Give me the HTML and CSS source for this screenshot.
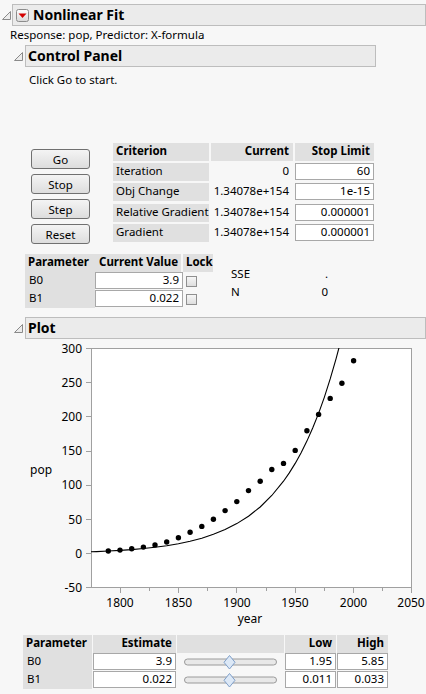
FILE: index.html
```html
<!DOCTYPE html>
<html>
<head>
<meta charset="utf-8">
<link rel="stylesheet" href="styles.css">
</head>
<body>
<div class="report">
  <div class="ohead top">
    <svg class="disc" width="9" height="9" viewBox="0 0 9 9"><polygon points="8.5,0.5 8.5,8.5 0.5,8.5" fill="#ececec" stroke="#8a8a8a"/></svg>
    <div class="bar">
      <svg class="redbtn" width="13" height="13" viewBox="0 0 13 13">
        <defs><linearGradient id="rb" x1="0" y1="0" x2="0" y2="1"><stop offset="0" stop-color="#ffffff"/><stop offset="1" stop-color="#d8d8d8"/></linearGradient></defs>
        <rect x="0.5" y="0.5" width="12" height="12" rx="2" fill="url(#rb)" stroke="#8c8c8c"/>
        <polygon points="2.5,4.5 10.5,4.5 6.5,9" fill="#d40000"/>
      </svg>
      <span class="title">Nonlinear Fit</span>
    </div>
  </div>
  <div class="resp">Response: pop, Predictor: X-formula</div>

  <div class="ohead sub cp">
    <svg class="disc" width="9" height="9" viewBox="0 0 9 9"><polygon points="8.5,0.5 8.5,8.5 0.5,8.5" fill="#ececec" stroke="#8a8a8a"/></svg>
    <div class="bar"><span class="title t2">Control Panel</span></div>
  </div>
  <div class="hint">Click Go to start.</div>

  <div class="cp-row">
    <div class="buttons">
      <div class="btn">Go</div>
      <div class="btn">Stop</div>
      <div class="btn">Step</div>
      <div class="btn">Reset</div>
    </div>
    <div class="grid crit">
      <div class="hd l">Criterion</div><div class="hd r">Current</div><div class="hd r">Stop Limit</div>
      <div class="lab">Iteration</div><div class="val">0</div><div class="box">60</div>
      <div class="lab">Obj Change</div><div class="val">1.34078e+154</div><div class="box">1e-15</div>
      <div class="lab">Relative Gradient</div><div class="val">1.34078e+154</div><div class="box">0.000001</div>
      <div class="lab">Gradient</div><div class="val">1.34078e+154</div><div class="box">0.000001</div>
    </div>
  </div>

  <div class="param-row">
    <div class="grid ptab">
      <div class="hd l">Parameter</div><div class="hd r">Current Value</div><div class="hd l lock">Lock</div>
      <div class="lab">B0</div><div class="box">3.9</div><div class="chk"><span class="cb"></span></div>
      <div class="lab">B1</div><div class="box">0.022</div><div class="chk"><span class="cb"></span></div>
    </div>
    <div class="sse">
      <div>SSE</div><div class="sv">.</div>
      <div>N</div><div class="sv">0</div>
    </div>
  </div>

  <div class="ohead sub plot">
    <svg class="disc" width="9" height="9" viewBox="0 0 9 9"><polygon points="8.5,0.5 8.5,8.5 0.5,8.5" fill="#ececec" stroke="#8a8a8a"/></svg>
    <div class="bar"><span class="title t2">Plot</span></div>
  </div>

  <svg class="chart" width="426" height="292" viewBox="0 340 426 292">
    <defs><clipPath id="fr"><rect x="91" y="349" width="321" height="240"/></clipPath></defs>
    <rect x="91.5" y="349.5" width="320" height="239" fill="#ffffff" stroke="#a0a0a0"/>
    <g stroke="#a0a0a0" stroke-width="1">
      <line x1="86" y1="349.5" x2="91" y2="349.5"/>
      <line x1="86" y1="383.5" x2="91" y2="383.5"/>
      <line x1="86" y1="417.5" x2="91" y2="417.5"/>
      <line x1="86" y1="452.5" x2="91" y2="452.5"/>
      <line x1="86" y1="486.5" x2="91" y2="486.5"/>
      <line x1="86" y1="520.5" x2="91" y2="520.5"/>
      <line x1="86" y1="554.5" x2="91" y2="554.5"/>
      <line x1="86" y1="588.5" x2="91" y2="588.5"/>
      <line x1="120.5" y1="589" x2="120.5" y2="594"/>
      <line x1="178.5" y1="589" x2="178.5" y2="594"/>
      <line x1="236.5" y1="589" x2="236.5" y2="594"/>
      <line x1="295.5" y1="589" x2="295.5" y2="594"/>
      <line x1="353.5" y1="589" x2="353.5" y2="594"/>
      <line x1="411.5" y1="589" x2="411.5" y2="594"/>
      <line x1="149.5" y1="589" x2="149.5" y2="592"/>
      <line x1="207.5" y1="589" x2="207.5" y2="592"/>
      <line x1="266.5" y1="589" x2="266.5" y2="592"/>
      <line x1="324.5" y1="589" x2="324.5" y2="592"/>
      <line x1="382.5" y1="589" x2="382.5" y2="592"/>
    </g>
    <g class="ax" text-anchor="end">
      <text x="82" y="353.5">300</text>
      <text x="82" y="387.5">250</text>
      <text x="82" y="421.5">200</text>
      <text x="82" y="456">150</text>
      <text x="82" y="490">100</text>
      <text x="82" y="524.5">50</text>
      <text x="82" y="558.5">0</text>
      <text x="82" y="593">-50</text>
    </g>
    <g class="ax" text-anchor="middle">
      <text x="120" y="608">1800</text>
      <text x="178.5" y="608">1850</text>
      <text x="237" y="608">1900</text>
      <text x="295" y="608">1950</text>
      <text x="353.5" y="608">2000</text>
      <text x="411" y="608">2050</text>
      <text x="250" y="624">year</text>
    </g>
    <text class="ax" x="30" y="475">pop</text>
    <g clip-path="url(#fr)">
      <polyline fill="none" stroke="#000" stroke-width="1.1" points="90.8,552.8 96.6,552.6 108.3,552.0 120,551.4 131.7,550.6 143.4,549.5 155,548.3 166.7,546.7 178.4,544.7 190.1,542.2 201.8,539.2 213.4,535.3 225.1,530.6 236.8,524.6 248.5,517.2 260.2,508.0 271.8,496.5 283.5,482.2 289.3,473.9 295.2,464.4 301,453.9 306.9,442.1 312.7,429.0 318.6,414.4 324.4,398.1 330.2,379.9 336.1,359.6 338.9,349 341,341"/>
    </g>
    <g fill="#000">
      <circle cx="108.3" cy="552.0" r="2.7"/>
      <circle cx="120" cy="551.1" r="2.7"/>
      <circle cx="131.7" cy="549.8" r="2.7"/>
      <circle cx="143.4" cy="548.1" r="2.7"/>
      <circle cx="155" cy="545.9" r="2.7"/>
      <circle cx="166.7" cy="543.0" r="2.7"/>
      <circle cx="178.4" cy="538.8" r="2.7"/>
      <circle cx="190.1" cy="533.2" r="2.7"/>
      <circle cx="201.8" cy="527.4" r="2.7"/>
      <circle cx="213.4" cy="520.3" r="2.7"/>
      <circle cx="225.1" cy="511.6" r="2.7"/>
      <circle cx="236.8" cy="502.6" r="2.7"/>
      <circle cx="248.5" cy="491.6" r="2.7"/>
      <circle cx="260.2" cy="482.2" r="2.7"/>
      <circle cx="271.8" cy="470.5" r="2.7"/>
      <circle cx="283.5" cy="464.4" r="2.7"/>
      <circle cx="295.2" cy="451.4" r="2.7"/>
      <circle cx="306.9" cy="431.8" r="2.7"/>
      <circle cx="318.6" cy="415.4" r="2.7"/>
      <circle cx="330.2" cy="399.4" r="2.7"/>
      <circle cx="341.9" cy="384.2" r="2.7"/>
      <circle cx="353.6" cy="361.8" r="2.7"/>
    </g>
  </svg>

  <div class="grid est">
    <div class="hd l">Parameter</div><div class="hd r">Estimate</div><div class="hd"></div><div class="hd r">Low</div><div class="hd r">High</div>
    <div class="lab">B0</div><div class="box">3.9</div>
    <div class="sl"><svg width="107" height="18" viewBox="0 0 107 18"><rect x="7.5" y="6" width="92" height="6" rx="3" fill="#e8e8e8" stroke="#9a9a9a"/><polygon points="52.5,2.5 58,9.3 52.5,16 47,9.3" fill="#dce8f6" stroke="#7f9fc9" stroke-linejoin="round"/></svg></div>
    <div class="box">1.95</div><div class="box">5.85</div>
    <div class="lab">B1</div><div class="box">0.022</div>
    <div class="sl"><svg width="107" height="18" viewBox="0 0 107 18"><rect x="7.5" y="6" width="92" height="6" rx="3" fill="#e8e8e8" stroke="#9a9a9a"/><polygon points="52.5,2.5 58,9.3 52.5,16 47,9.3" fill="#dce8f6" stroke="#7f9fc9" stroke-linejoin="round"/></svg></div>
    <div class="box">0.011</div><div class="box">0.033</div>
  </div>
</div>
</body>
</html>
```

FILE: styles.css
```css
* { box-sizing: border-box; }
html, body { margin: 0; padding: 0; }
body {
  background: #f7f7f7;
  font-family: "Noto Sans", "Open Sans", sans-serif;
  font-size: 11.5px;
  color: #000;
  width: 426px;
  height: 694px;
  overflow: hidden;
}
.report { padding-top: 4px; }

.ohead { display: flex; align-items: center; height: 22px; }
.disc { display: block; flex: none; }
.ohead.top { padding-left: 2px; }
.ohead.top .disc { margin-right: 1px; }
.ohead.sub { padding-left: 14px; }
.ohead.sub .disc { margin-right: 2px; }
.bar {
  height: 22px;
  background: #ebebeb;
  border: 1px solid #bdbdbd;
  display: flex;
  align-items: center;
}
.ohead.top .bar { width: 414px; }
.ohead.cp { margin-top: 2px; }
.ohead.cp .bar { width: 351px; }
.ohead.plot { margin-top: 9px; }
.ohead.plot .bar { width: 401px; }
.redbtn { display: block; margin-left: 3px; margin-right: 4px; flex: none; }
.title { font-weight: bold; font-size: 14px; line-height: 20px; }
.t2 { margin-left: 2px; }

.resp { margin-top: 1px; margin-left: 10px; line-height: 16px; height: 16px; }
.hint { margin-top: 5px; margin-left: 29px; line-height: 16px; height: 16px; }

.cp-row { display: flex; margin-top: 55px; }
.buttons {
  display: flex;
  flex-direction: column;
  gap: 5px;
  margin-left: 31px;
  margin-top: 6px;
  margin-right: 23px;
}
.btn {
  width: 59px;
  height: 20px;
  border: 1px solid #707070;
  border-radius: 3px;
  background: linear-gradient(#f4f4f4, #dddddd);
  display: flex;
  align-items: center;
  justify-content: center;
}

.grid { display: grid; }
.grid > div { height: 18px; line-height: 16px; white-space: nowrap; }
.hd { background: #e0e0e0; font-weight: bold; padding: 0 4px; }
.hd.l { text-align: left; padding-left: 3px; }
.hd.r { text-align: right; }
.lab { background: #e0e0e0; padding-left: 4px; }
.val { text-align: right; padding-right: 4px; }
.box {
  background: #fff;
  border: 1px solid #a8a8a8;
  text-align: right;
  padding-right: 3px;
  line-height: 14px !important;
  height: 17px !important;
  margin-bottom: 1px;
}

.crit { grid-template-columns: 96px 82px 79px; column-gap: 2px; }
.crit .lab { padding-left: 3px; }

.param-row { display: flex; margin-top: 10px; margin-left: 25px; }
.ptab { grid-template-columns: 70px 88px 30px; column-gap: 0; }
.ptab .hd.r { margin-right: 2px; }
.ptab .lock { padding-left: 3px; }
.chk { display: flex; align-items: center; padding-left: 3px; }
.cb {
  display: block;
  width: 11px;
  height: 11px;
  border: 1px solid #8f8f8f;
  background: linear-gradient(#f6f6f6, #dedede);
}
.sse {
  display: grid;
  grid-template-columns: 60px 37px;
  margin-left: 18px;
  margin-top: 11px;
  line-height: 18px;
  align-content: start;
}
.sv { text-align: right; }

.chart { display: block; }
.ax { font-family: "Noto Sans", sans-serif; font-size: 12px; fill: #000; }

.est {
  grid-template-columns: 69px 83px 107px 51px 51px;
  column-gap: 1px;
  margin-left: 23px;
  margin-top: 4px;
}
.est .lab { padding-left: 4px; }
.sl svg { display: block; }
```
